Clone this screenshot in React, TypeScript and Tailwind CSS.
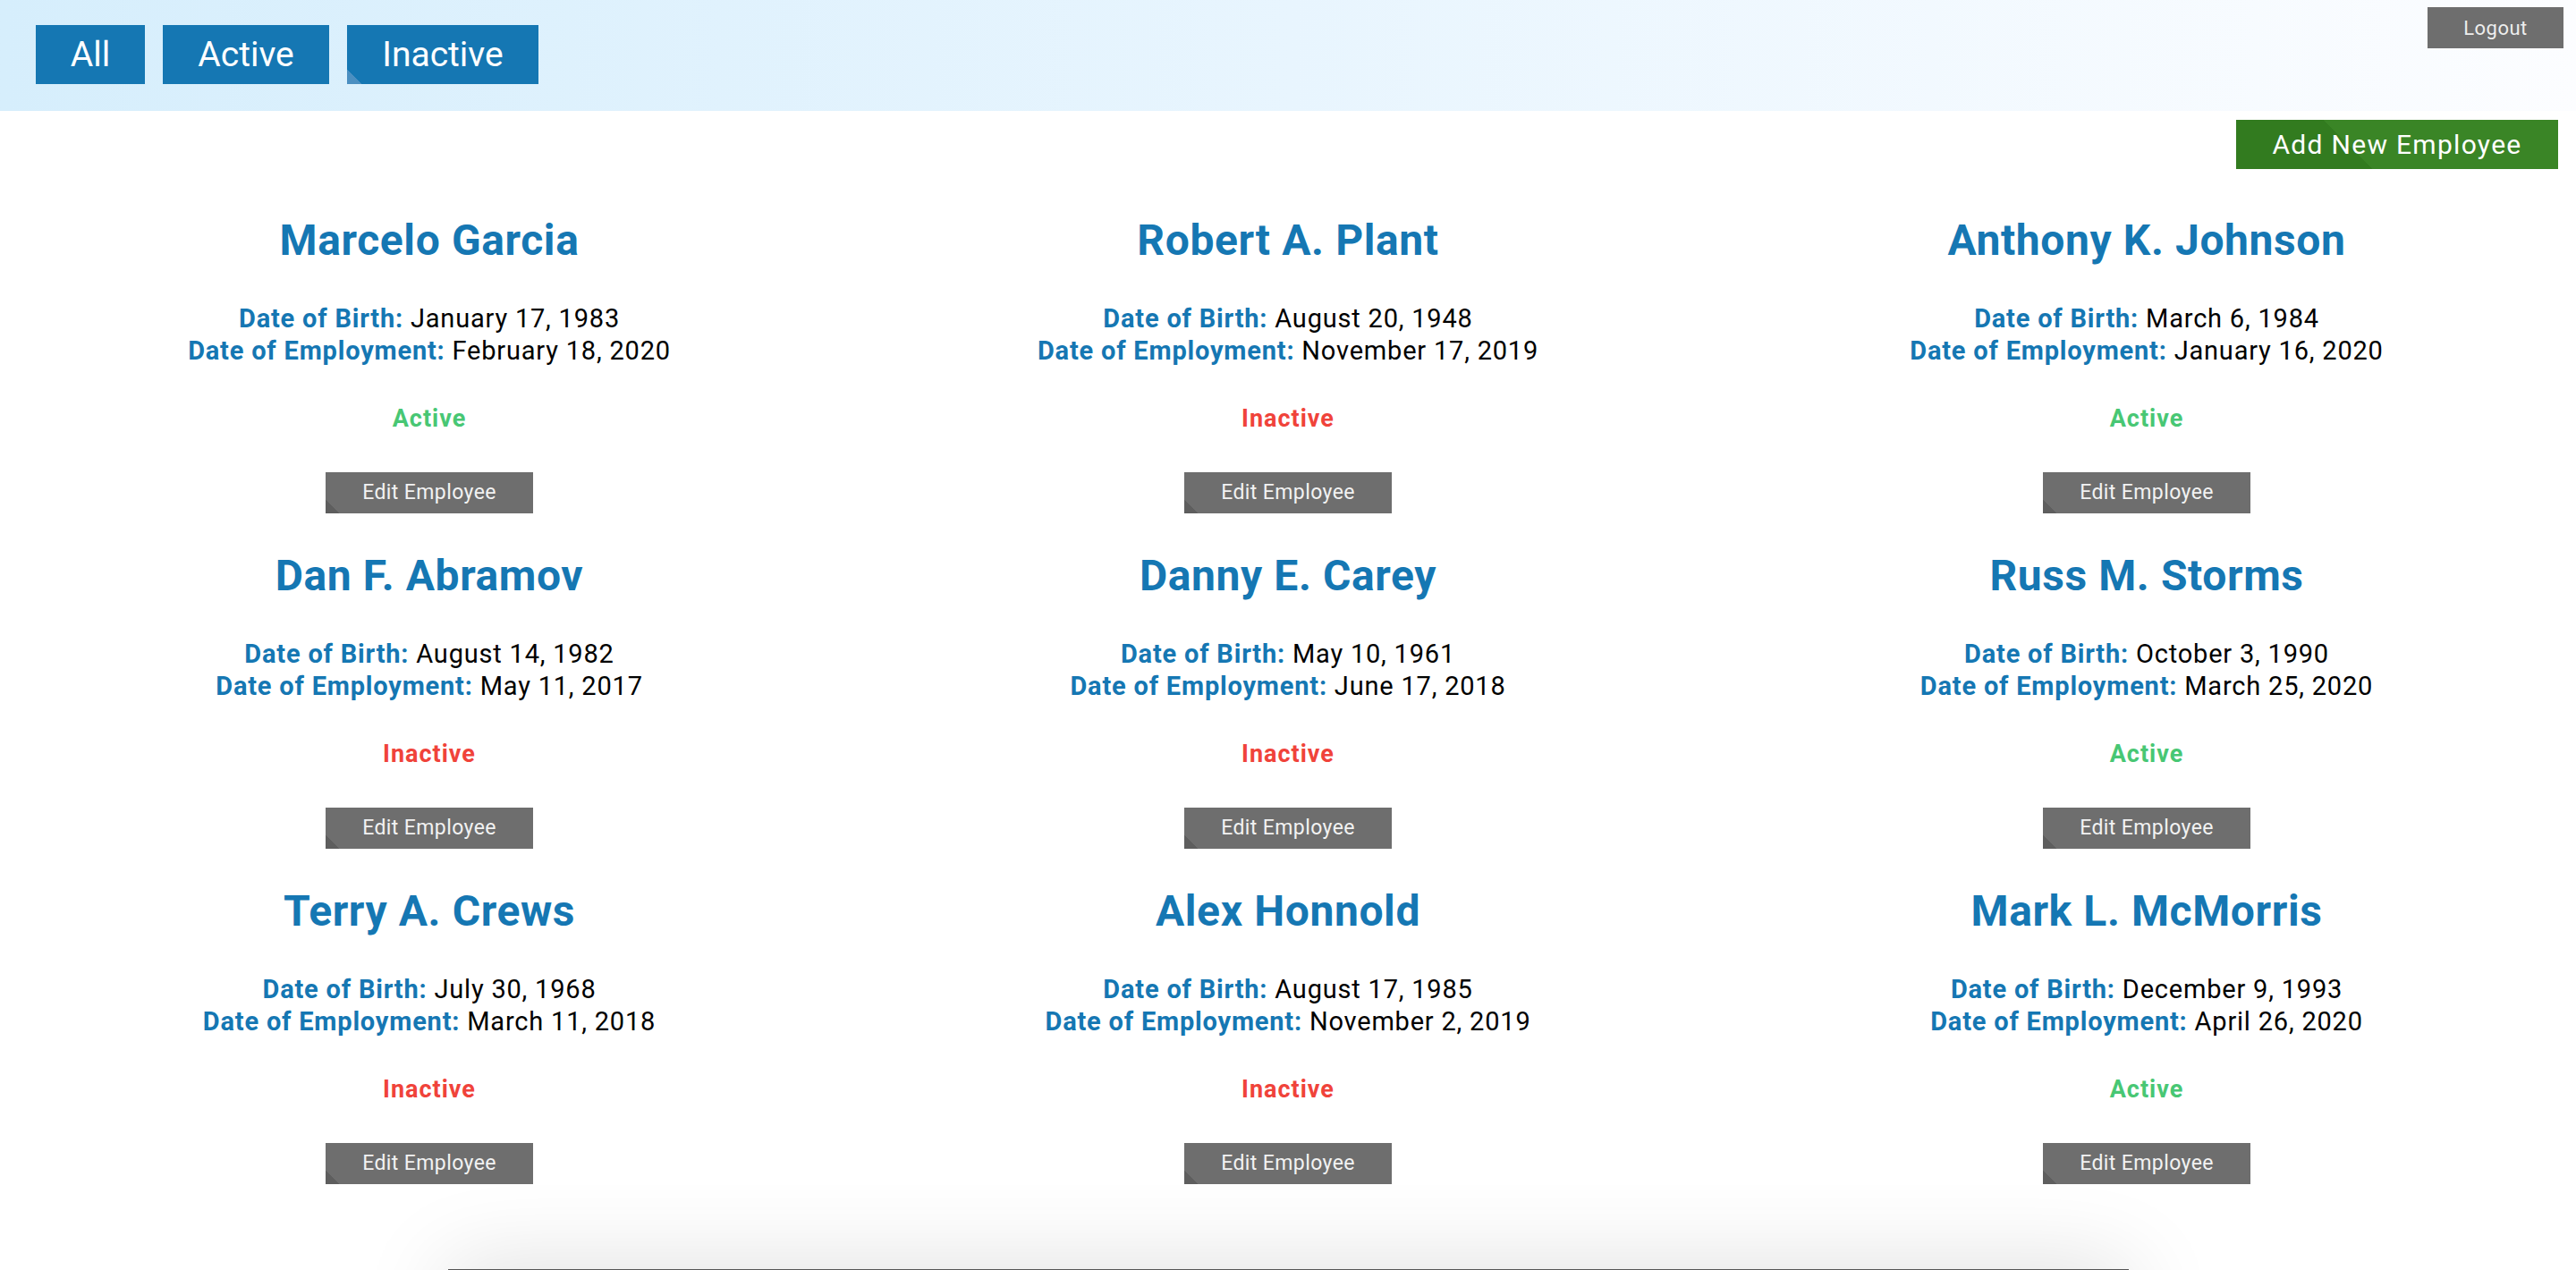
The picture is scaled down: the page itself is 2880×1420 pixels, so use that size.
const employees = [
  { name: "Marcelo Garcia", dob: "January 17, 1983", doe: "February 18, 2020", active: true },
  { name: "Robert A. Plant", dob: "August 20, 1948", doe: "November 17, 2019", active: false },
  { name: "Anthony K. Johnson", dob: "March 6, 1984", doe: "January 16, 2020", active: true },
  { name: "Dan F. Abramov", dob: "August 14, 1982", doe: "May 11, 2017", active: false },
  { name: "Danny E. Carey", dob: "May 10, 1961", doe: "June 17, 2018", active: false },
  { name: "Russ M. Storms", dob: "October 3, 1990", doe: "March 25, 2020", active: true },
  { name: "Terry A. Crews", dob: "July 30, 1968", doe: "March 11, 2018", active: false },
  { name: "Alex Honnold", dob: "August 17, 1985", doe: "November 2, 2019", active: false },
  { name: "Mark L. McMorris", dob: "December 9, 1993", doe: "April 26, 2020", active: true },
];

type Employee = (typeof employees)[number];

const EmployeeCard = ({ employee }: { employee: Employee }) => {
  return (
    <div className="flex flex-col items-center pb-[41px]">
      <h2 className="mb-[40px] text-[48px] font-bold leading-[58px] tracking-[0.6px] text-[#1577b3]">
        {employee.name}
      </h2>
      <p className="text-[29px] leading-[36px] tracking-[0.8px] text-black">
        <span className="font-bold text-[#1577b3]">Date of Birth:</span> {employee.dob}
      </p>
      <p className="text-[29px] leading-[36px] tracking-[0.8px] text-black">
        <span className="font-bold text-[#1577b3]">Date of Employment:</span> {employee.doe}
      </p>
      {employee.active ? (
        <p className="mt-[40px] text-[27px] font-bold leading-[36px] tracking-[1px] text-[#48c774]">Active</p>
      ) : (
        <p className="mt-[40px] text-[27px] font-bold leading-[36px] tracking-[1px] text-[#f0433a]">Inactive</p>
      )}
      <button className="mt-[42px] flex h-[46px] w-[232px] items-center justify-center bg-[linear-gradient(45deg,#5e5e5e_11px,#6e6e6e_11px)] text-[23px] tracking-[0.4px] text-[#f2f2f2]">
        Edit Employee
      </button>
    </div>
  );
};

export default function App() {
  return (
    <div className="min-h-screen bg-white font-['Roboto',sans-serif]">
      <header className="flex h-[124px] items-start justify-between bg-gradient-to-r from-[#d6eefc] via-[#e8f5fe] to-[#fcfdff]">
        <div className="ml-[40px] mt-[28px] flex gap-[20px]">
          <button className="flex h-[66px] w-[122px] items-center justify-center bg-[#1577b3] text-[39px] text-white">
            All
          </button>
          <button className="flex h-[66px] w-[186px] items-center justify-center bg-[#1577b3] text-[39px] text-white">
            Active
          </button>
          <button className="flex h-[66px] w-[214px] items-center justify-center bg-[linear-gradient(45deg,#4b8fc1_12px,#1577b3_12px)] text-[39px] text-white">
            Inactive
          </button>
        </div>
        <button className="mr-[14px] mt-[8px] flex h-[46px] w-[152px] items-center justify-center bg-[#6e6e6e] text-[22px] tracking-[0.5px] text-[#ededed]">
          Logout
        </button>
      </header>

      <div className="mr-[20px] mt-[10px] flex justify-end">
        <button className="flex h-[55px] w-[360px] items-center justify-center bg-[linear-gradient(45deg,#327b1f_108px,#3a8526_108px)] text-[30px] tracking-[1.3px] text-white">
          Add New Employee
        </button>
      </div>

      <main className="mt-[51px] grid grid-cols-3">
        {employees.map((employee) => (
          <EmployeeCard key={employee.name} employee={employee} />
        ))}
      </main>

      <footer className="mx-auto mt-[54px] h-[80px] w-[1879px] bg-[#555555] shadow-[0_0_100px_rgba(0,0,0,0.15)]" />
    </div>
  );
}
